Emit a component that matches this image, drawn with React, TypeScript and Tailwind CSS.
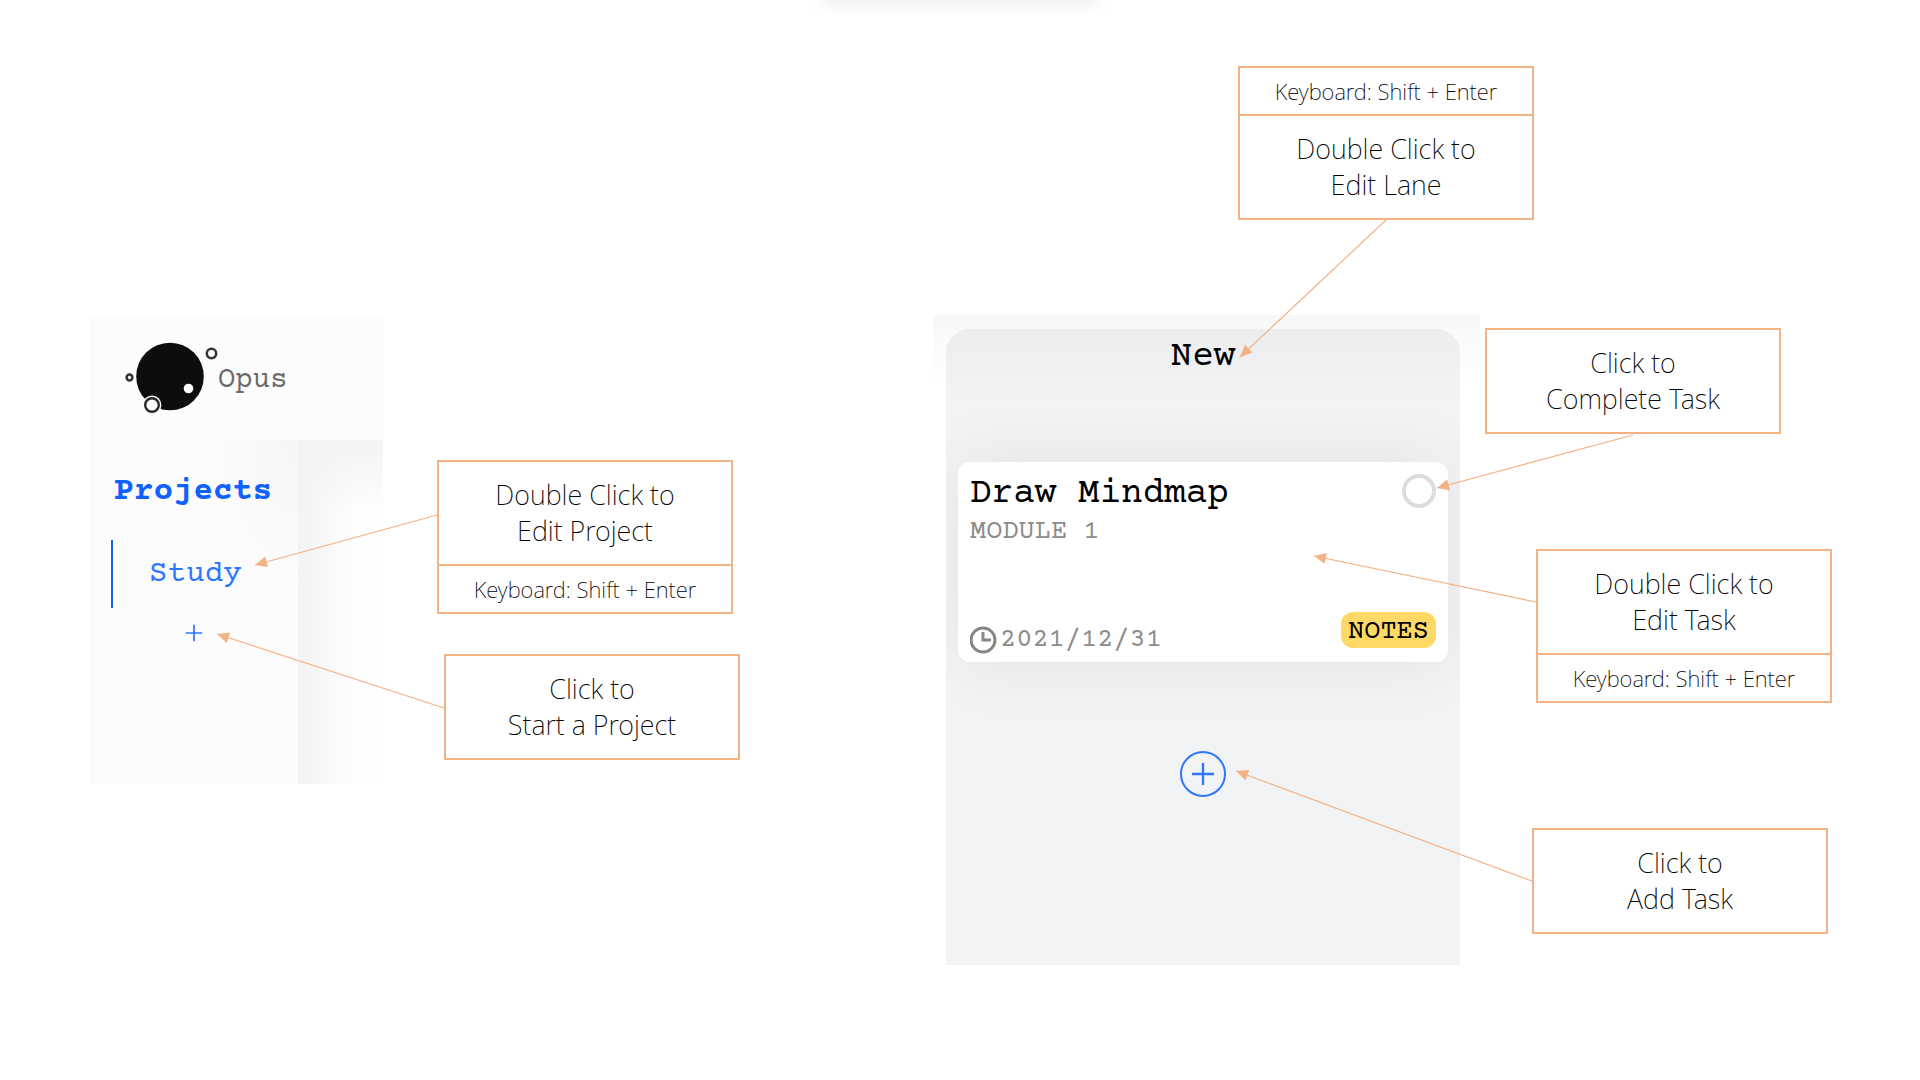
import type { ReactNode } from "react";

type Point = [number, number];

/** Thin connector that runs from a callout to a solid arrow head. */
function Arrow({ from, to }: { from: Point; to: Point }) {
  const angle = (Math.atan2(to[1] - from[1], to[0] - from[0]) * 180) / Math.PI;
  return (
    <g stroke="#f4b183" fill="#f4b183">
      <line x1={from[0]} y1={from[1]} x2={to[0]} y2={to[1]} strokeWidth="1.2" />
      <path
        d="M0 0L-12 -5.5V5.5Z"
        stroke="none"
        transform={`translate(${to[0]} ${to[1]}) rotate(${angle})`}
      />
    </g>
  );
}

function Arrows({ children }: { children: ReactNode }) {
  return (
    <svg
      className="pointer-events-none absolute top-0 left-0 overflow-visible"
      width="1"
      height="1"
      aria-hidden="true"
    >
      {children}
    </svg>
  );
}

function Shortcut() {
  return (
    <p className="border-2 border-[#f4b183] py-[7px] text-[22px] leading-8">
      Keyboard: Shift + Enter
    </p>
  );
}

function Callout({
  place,
  lines,
  shortcut,
}: {
  place: string;
  lines: [string, string];
  shortcut?: "above" | "below";
}) {
  return (
    <aside
      className={`absolute flex w-[296px] flex-col text-center font-['Noto_Sans',sans-serif] font-extralight text-black ${place}`}
    >
      {shortcut === "above" && <Shortcut />}
      <p
        className={`border-2 border-[#f4b183] py-[15px] text-[27px] leading-9 ${
          shortcut === "above" ? "-mt-0.5" : ""
        } ${shortcut === "below" ? "-mb-0.5" : ""}`}
      >
        {lines[0]}
        <br />
        {lines[1]}
      </p>
      {shortcut === "below" && <Shortcut />}
    </aside>
  );
}

function Logo() {
  return (
    <svg width="94" height="76" viewBox="0 0 94 76" aria-hidden="true">
      <circle cx="46" cy="37.5" r="33.8" fill="#0d0d0d" />
      <circle cx="64.5" cy="49.5" r="4.8" fill="#fff" />
      <circle cx="28" cy="66" r="9.4" fill="#fcfcfc" />
      <circle cx="28" cy="66" r="6.8" fill="#fff" stroke="#262626" strokeWidth="2.4" />
      <circle cx="87.5" cy="14.5" r="4.7" fill="#fff" stroke="#333" strokeWidth="2.5" />
      <circle cx="5.5" cy="38.5" r="2.9" fill="#fff" stroke="#333" strokeWidth="2.5" />
    </svg>
  );
}

function Plus({ size }: { size: number }) {
  return (
    <svg width={size} height={size} viewBox="0 0 24 24" stroke="currentColor" aria-hidden="true">
      <path d="M12 1V23M1 12H23" strokeWidth="2.3" />
    </svg>
  );
}

function Clock() {
  return (
    <svg width="28" height="28" viewBox="0 0 28 28" fill="none" stroke="#868686" aria-hidden="true">
      <circle cx="13" cy="14" r="12" strokeWidth="3" />
      <path d="M13 6V14H21" strokeWidth="3" />
    </svg>
  );
}

function ProjectsFigure() {
  return (
    <section className="relative w-[293px] shrink-0">
      <header className="flex h-[125px] items-start bg-[#fcfcfc] pt-6 pl-[34px]">
        <Logo />
        <span className="pt-6 text-[29px] leading-9 text-[#6b6b6b]">Opus</span>
      </header>
      <div className="flex h-[344px]">
        <nav className="w-52 bg-[#fcfcfc] bg-[radial-gradient(ellipse_at_top_right,#f6f6f6,#fcfcfc_30%)] pt-8">
          <h2 className="pl-6 text-[33px] leading-10 font-bold text-[#0f62fe]">Projects</h2>
          <button className="mt-7 ml-[21px] flex h-[68px] items-center border-l-2 border-[#0f62fe] pt-0.5 pl-9 text-[31px] text-[#2f76ff]">
            Study
          </button>
          <button aria-label="Start a project" className="mt-4 ml-[95px] block text-[#2f76ff]">
            <Plus size={18} />
          </button>
        </nav>
        <div className="flex-1 bg-[linear-gradient(to_bottom,#f3f3f3,transparent_22%),linear-gradient(to_right,#f3f3f3,#fefefe_65%,#fff)]" />
      </div>

      <Callout place="top-[145px] left-[347px]" lines={["Double Click to", "Edit Project"]} shortcut="below" />
      <Callout place="top-[339px] left-[354px]" lines={["Click to", "Start a Project"]} />
      <Arrows>
        <Arrow from={[347, 200]} to={[165, 250]} />
        <Arrow from={[354, 393]} to={[127, 319]} />
      </Arrows>
    </section>
  );
}

function TaskCard() {
  return (
    <article className="flex h-[200px] flex-col rounded-xl bg-white px-3 pt-3 pb-1.5 shadow-[0_0_70px_rgba(0,0,0,0.07)]">
      <div className="flex items-start justify-between">
        <h3 className="text-[36px] leading-10 text-black">Draw Mindmap</h3>
        <input
          type="checkbox"
          aria-label="Complete task"
          className="size-[34px] appearance-none rounded-full border-4 border-[#dcdcdc] bg-white"
        />
      </div>
      <p className="text-[27px] leading-9 text-[#8c8c8c]">MODULE 1</p>
      <div className="mt-auto flex items-start justify-between">
        <time className="flex items-center gap-0.5 pt-3 text-[27px] leading-8 text-[#8c8c8c]">
          <Clock />
          <span>2021/12/31</span>
        </time>
        <button className="h-9 rounded-xl bg-[#ffd966] px-[7px] pt-1 text-[27px] leading-8 text-black">
          NOTES
        </button>
      </div>
    </article>
  );
}

function LaneFigure() {
  return (
    <section className="relative w-[547px] shrink-0 bg-[linear-gradient(to_bottom,#f8f8f8,#fff_70px)] pt-[14px] pr-5 pl-[13px]">
      <div className="h-[636px] overflow-hidden rounded-t-3xl bg-[#f1f3f5] bg-[linear-gradient(to_bottom,#ebedef,#f1f3f5_70px)] px-3 pt-2">
        <h2 className="text-center text-[36px] leading-10 text-black">New</h2>
        <div className="pt-[85px]">
          <TaskCard />
        </div>
        <button
          aria-label="Add task"
          className="mx-auto mt-[89px] flex size-[46px] items-center justify-center rounded-full border-2 border-[#2f76ff] text-[#2f76ff]"
        >
          <Plus size={24} />
        </button>
      </div>

      <Callout place="-top-[249px] left-[305px]" lines={["Double Click to", "Edit Lane"]} shortcut="above" />
      <Callout place="top-[13px] left-[552px]" lines={["Click to", "Complete Task"]} />
      <Callout place="top-[234px] left-[603px]" lines={["Double Click to", "Edit Task"]} shortcut="below" />
      <Callout place="top-[513px] left-[599px]" lines={["Click to", "Add Task"]} />
      <Arrows>
        <Arrow from={[453, -95]} to={[307, 42]} />
        <Arrow from={[700, 120]} to={[504, 173]} />
        <Arrow from={[603, 287]} to={[381, 241]} />
        <Arrow from={[599, 566]} to={[303, 456]} />
      </Arrows>
    </section>
  );
}

export default function App() {
  return (
    <div className="relative min-h-screen overflow-hidden bg-white font-['Courier_Prime','Liberation_Mono',monospace]">
      <div className="mx-auto h-0 w-[270px] shadow-[0_0_14px_3px_rgba(0,0,0,0.13)]" />
      <main className="flex items-start gap-[550px] pt-[315px] pl-[90px]">
        <ProjectsFigure />
        <LaneFigure />
      </main>
    </div>
  );
}
